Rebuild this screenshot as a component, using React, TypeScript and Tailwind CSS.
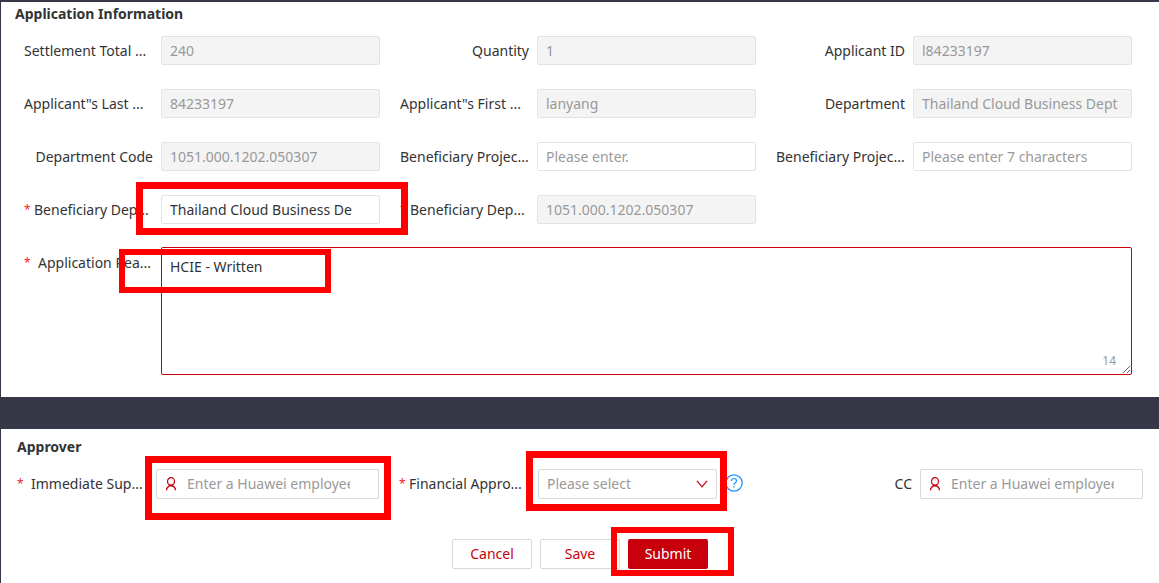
import React from 'react';

type FieldProps = {
  id: string;
  label: string;
  value?: string;
  placeholder?: string;
  disabled?: boolean;
  required?: boolean;
  clipped?: boolean;
  children?: React.ReactNode;
};

const inputBase =
  'block h-[29px] w-full rounded-[2px] border border-[#e3e3e3] px-2 text-[14px] leading-5 outline-none placeholder:text-[#999999] placeholder:opacity-100';

function Star({ wide }: { wide?: boolean }) {
  return <span className={`shrink-0 text-[12px] text-[#f5222d] ${wide ? 'w-[14px]' : 'w-[10px]'}`}>*</span>;
}

function Field({ id, label, value, placeholder, disabled, required, clipped, children }: FieldProps) {
  return (
    <div className="flex items-center gap-2">
      <label
        htmlFor={id}
        className={`flex w-[129px] shrink-0 whitespace-nowrap ${clipped ? 'justify-start' : 'justify-end'}`}
      >
        {required && <Star />}
        {label}
      </label>
      <div className="relative min-w-0 flex-1">
        <input
          id={id}
          type="text"
          defaultValue={value}
          placeholder={placeholder}
          disabled={disabled}
          className={`${inputBase} ${disabled ? 'bg-[#f4f4f4] text-[#999999]' : 'bg-white text-[#333333]'}`}
        />
        {children}
      </div>
    </div>
  );
}

function Highlight({ className }: { className: string }) {
  return <div className={`pointer-events-none absolute z-10 border-[#ff0000] ${className}`} />;
}

function PersonInput({ id }: { id: string }) {
  return (
    <>
      <svg
        viewBox="0 0 12 14"
        className="absolute top-2 left-[9px] h-[14px] w-3"
        fill="none"
        stroke="#c7000b"
        strokeWidth="1.2"
      >
        <ellipse cx="6" cy="4.4" rx="3.5" ry="3.7" />
        <path d="M1.4 13.4C1.6 10.8 3.2 9.2 6 8.4C8.8 9.2 10.4 10.8 10.6 13.4" />
        <path d="M3.8 7.4L6 8.9L8.2 7.4" />
      </svg>
      <input
        id={id}
        type="text"
        placeholder="Enter a Huawei employee"
        className="block h-[30px] w-full rounded-[2px] border border-[#d9d9d9] bg-white pr-7 pb-px pl-[30px] text-[14px] leading-5 text-[#333333] outline-none placeholder:text-[#999999] placeholder:opacity-100"
      />
    </>
  );
}

export default function App() {
  return (
    <div className="flex min-h-screen flex-col bg-[#363848] pt-[2px] pl-px font-['Noto_Sans','Open_Sans',sans-serif] text-[14px] leading-5 text-[#333333]">
      <section className="bg-white pr-[27px] pb-[22px] pl-[23px]">
        <h2 className="-ml-[9px] pt-[2px] font-bold">Application Information</h2>
        <div className="mt-3 grid grid-cols-3 gap-x-5 gap-y-6">
          <Field id="total" label="Settlement Total ..." value="240" disabled clipped />
          <Field id="quantity" label="Quantity" value="1" disabled />
          <Field id="applicant" label="Applicant ID" value="l84233197" disabled />
          <Field id="last" label={'Applicant"s Last ...'} value="84233197" disabled clipped />
          <Field id="first" label={'Applicant"s First ...'} value="lanyang" disabled clipped />
          <Field id="department" label="Department" value="Thailand Cloud Business Dept" disabled />
          <Field id="code" label="Department Code" value="1051.000.1202.050307" disabled />
          <Field id="project" label="Beneficiary Projec..." placeholder="Please enter." clipped />
          <Field id="project-code" label="Beneficiary Projec..." placeholder="Please enter 7 characters" clipped />
          <Field id="ben-dept" label="Beneficiary Dep..." value="Thailand Cloud Business De" required clipped>
            <Highlight className="-top-[13px] -right-7 -bottom-[11px] -left-[25px] border-7" />
          </Field>
          <Field id="ben-code" label="Beneficiary Dep..." value="1051.000.1202.050307" disabled required clipped />
        </div>
        <div className="mt-[23px] flex items-start gap-2">
          <label htmlFor="reason" className="flex w-[129px] shrink-0 pt-[6px] whitespace-nowrap">
            <Star wide />
            Application Rea...
          </label>
          <div className="relative min-w-0 flex-1">
            <textarea
              id="reason"
              defaultValue="HCIE - Written"
              className="block h-32 w-full resize rounded-[2px] border border-[#c7000b] bg-white px-2 py-[9px] text-[14px] leading-5 outline-none"
            />
            <span className="pointer-events-none absolute right-4 bottom-1 text-[12px] leading-5 text-[#999999]">14</span>
            <Highlight className="top-[2px] -left-[42px] h-11 w-[212px] border-6" />
          </div>
        </div>
      </section>

      <section className="mt-8 flex-1 bg-white pr-4 pl-4">
        <h2 className="pt-2 font-bold">Approver</h2>
        <div className="mt-3 grid grid-cols-3 gap-x-5">
          <div className="flex items-center gap-2">
            <label htmlFor="supervisor" className="flex w-[131px] shrink-0 whitespace-nowrap">
              <Star wide />
              Immediate Sup...
            </label>
            <div className="relative min-w-0 flex-1">
              <PersonInput id="supervisor" />
              <Highlight className="-top-[13px] -right-3 -bottom-[21px] -left-[11px] border-7" />
            </div>
          </div>
          <div className="flex items-center gap-2 pr-[18px]">
            <label htmlFor="financial" className="flex w-[131px] shrink-0 whitespace-nowrap">
              <Star />
              Financial Appro...
            </label>
            <div className="relative min-w-0 flex-1">
              <select
                id="financial"
                className="block h-[30px] w-full appearance-none rounded-[2px] border border-[#d9d9d9] bg-white px-2 text-[14px] leading-5 text-[#999999] outline-none"
              >
                <option>Please select</option>
              </select>
              <svg
                viewBox="0 0 12 8"
                className="pointer-events-none absolute top-[11px] right-[9px] h-2 w-3"
                fill="none"
                stroke="#c7000b"
                strokeWidth="1.2"
              >
                <path d="M1 0.8L6 6.8L11 0.8" />
              </svg>
              <Highlight className="-top-[18px] -right-[10px] -bottom-3 -left-3 border-7" />
            </div>
            <button type="button" aria-label="Help" className="mb-[2px] h-[18px] w-[18px] shrink-0">
              <svg viewBox="0 0 18 18" className="h-full w-full" fill="none" stroke="#1890ff" strokeWidth="1.2">
                <circle cx="9" cy="9" r="8.2" />
                <path d="M6.5 7C6.5 5.4 7.6 4.5 9 4.5S11.5 5.4 11.5 6.8C11.5 8.6 9 8.7 9 10.9" />
                <path d="M9 12.2V13.6" strokeWidth="1.4" />
              </svg>
            </button>
          </div>
          <div className="flex items-center gap-2">
            <label htmlFor="cc" className="w-[131px] shrink-0 text-right">
              CC
            </label>
            <div className="relative min-w-0 flex-1">
              <PersonInput id="cc" />
            </div>
          </div>
        </div>
        <div className="mt-10 flex justify-center gap-2 pb-[14px]">
          <button type="button" className="h-[30px] w-20 rounded-[2px] border border-[#d9d9d9] bg-white text-[#c7000b]">
            Cancel
          </button>
          <button type="button" className="h-[30px] w-20 rounded-[2px] border border-[#d9d9d9] bg-white text-[#c7000b]">
            Save
          </button>
          <div className="relative">
            <button type="button" className="block h-[30px] w-20 rounded-[2px] bg-[#c7000b] text-white">
              Submit
            </button>
            <Highlight className="-top-3 -right-[26px] -bottom-[7px] -left-[17px] border-6" />
          </div>
        </div>
      </section>
    </div>
  );
}
